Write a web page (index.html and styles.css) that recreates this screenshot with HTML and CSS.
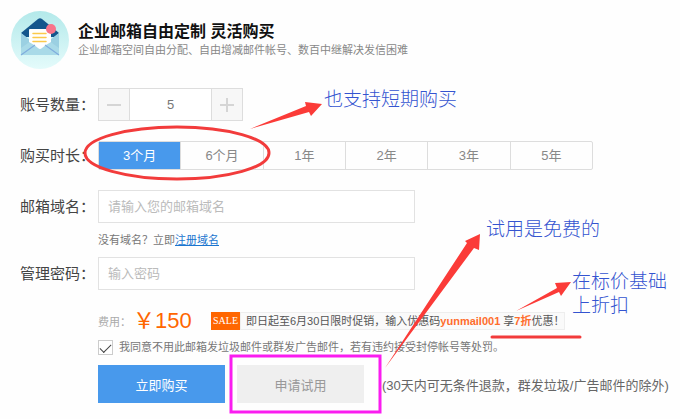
FILE: index.html
```html
<!DOCTYPE html>
<html lang="zh-CN">

<head>
    <meta charset="UTF-8">
    <meta name="viewport" content="width=device-width, initial-scale=1.0">
    <link rel="stylesheet" href="styles.css">
    <title>企业邮箱购买</title>
</head>

<body>

    <header class="page-header">
        <svg class="logo" viewBox="0 0 58 58" aria-hidden="true">
            <defs>
                <linearGradient id="logoBg" x1="0" y1="0" x2="0" y2="1">
                    <stop offset="0" stop-color="#b3e9ea" />
                    <stop offset="1" stop-color="#e4fbfb" />
                </linearGradient>
            </defs>
            <circle cx="29" cy="29" r="29" fill="url(#logoBg)" />
            <path d="M10 22 L27 8 Q29 6.500 31 8 L48 22 V26 H10 Z" fill="#14568c" />
            <path d="M10 22 L29 37 L48 22 V44 H10 Z" fill="#a9dae8" />
            <path d="M10 22 L20 30 L10 37 Z M48 22 L38 30 L48 37 Z" fill="#9bd0e2" />
            <path d="M18 19 Q18 18 19 18 H39 Q40 18 40 19 V31 Q36 33 31 37 Q29 39 27 37 Q22 33 18 31 Z" fill="#fff" />
            <path d="M10 44 L24 34 M48 44 L34 34" stroke="#80addd" stroke-width="1.200" fill="none" />
            <path d="M22 22.500 H35 M22 26.500 H35 M22 30.500 H35" stroke="#fbca4b" stroke-width="1.500" stroke-linecap="round" />
            <circle cx="40" cy="18" r="5" fill="#f9748a" />
        </svg>
        <div>
            <h1>企业邮箱自由定制 灵活购买</h1>
            <p>企业邮箱空间自由分配、自由增减邮件帐号、数百中继解决发信困难</p>
        </div>
    </header>

    <form class="buy-form">
        <div class="row">
            <label class="row-label" for="count">账号数量：</label>
            <div class="stepper">
                <button type="button" aria-label="减少"><svg viewBox="0 0 14 14"><path d="M0 7 H14" /></svg></button>
                <input type="text" id="count" value="5">
                <button type="button" aria-label="增加"><svg viewBox="0 0 14 14"><path d="M0 7 H14 M7 0 V14" /></svg></button>
            </div>
        </div>

        <div class="row" role="radiogroup" aria-labelledby="periodLabel">
            <span class="row-label" id="periodLabel">购买时长：</span>
            <div class="periods">
                <label><input type="radio" name="period" checked><span>3个月</span></label>
                <label><input type="radio" name="period"><span>6个月</span></label>
                <label><input type="radio" name="period"><span>1年</span></label>
                <label><input type="radio" name="period"><span>2年</span></label>
                <label><input type="radio" name="period"><span>3年</span></label>
                <label><input type="radio" name="period"><span>5年</span></label>
            </div>
        </div>

        <div class="row">
            <label class="row-label" for="domain">邮箱域名：</label>
            <input class="text-input" type="text" id="domain" placeholder="请输入您的邮箱域名">
        </div>
        <p class="hint">没有域名？立即<a href="#">注册域名</a></p>

        <div class="row">
            <label class="row-label" for="password">管理密码：</label>
            <input class="text-input" type="password" id="password" placeholder="输入密码">
        </div>

        <div class="price-row">
            <span class="price-label">费用：</span>
            <span class="price">￥150</span>
            <span class="sale">SALE</span>
            <p class="promo">即日起至6月30日限时促销，输入优惠码<b>yunmail001</b> 享<b>7折</b>优惠！</p>
        </div>

        <label class="agree"><input type="checkbox" checked>我同意不用此邮箱发垃圾邮件或群发广告邮件，若有违约接受封停帐号等处罚。</label>

        <div class="actions">
            <button type="button" class="buy">立即购买</button>
            <button type="button" class="trial">申请试用</button>
            <span class="refund">(30天内可无条件退款，群发垃圾/广告邮件的除外)</span>
        </div>
    </form>

    <!-- callouts drawn over the form -->
    <svg class="marks" viewBox="0 0 680 419" aria-hidden="true">
        <ellipse cx="177" cy="153" rx="92" ry="26" />
        <path d="M250 129 L306 106 L305 102 L322 104 L311 116 L309 112 Z" />
        <path d="M385 368 L467 243 L465 241 L480 234 L479 250 L474 248 Z" />
        <path d="M516 311 L557 288 L555 283 L571 282 L561 296 L559 292 Z" />
        <line x1="492" y1="337" x2="580" y2="337" />
        <rect x="231" y="356" width="149" height="56" />
    </svg>
    <p class="note note-period">也支持短期购买</p>
    <p class="note note-trial">试用是免费的</p>
    <p class="note note-discount">在标价基础<br>上折扣</p>

</body>

</html>
```

FILE: styles.css
```css
* {
    box-sizing: border-box;
}

body {
    position: relative;
    margin: 0;
    background-color: #fefefe;
    color: #444;
    font-family: "Liberation Sans", "Noto Sans CJK SC", sans-serif;
    font-size: 13px;
}

h1,
p {
    margin: 0;
}

button,
input {
    margin: 0;
    padding: 0;
    border: 0;
    font: inherit;
}

button {
    cursor: pointer;
}

.page-header {
    display: flex;
    align-items: center;
    gap: 9px;
    padding: 11px 11px 0;
}

.logo {
    width: 58px;
    height: 58px;
}

.page-header h1 {
    color: #111;
    font-size: 16px;
    line-height: 20px;
}

.page-header p {
    color: #888;
    font-size: 11px;
    line-height: 16px;
}

.buy-form {
    padding: 19px 12px 16px 98px;
}

.row {
    display: flex;
    align-items: center;
    margin-left: -78px;
    margin-bottom: 20px;
}

.row-label {
    flex: none;
    width: 78px;
    font-size: 15px;
    line-height: 20px;
    white-space: nowrap;
}

.stepper {
    display: flex;
    height: 33px;
    border: 1px solid #ddd;
}

.stepper button {
    width: 30px;
    background-color: #f7f7f7;
}

.stepper svg {
    display: block;
    width: 14px;
    margin: 0 auto;
    stroke: #d5d5d5;
    stroke-width: 2;
}

.stepper input {
    width: 83px;
    border: solid #ddd;
    border-width: 0 1px;
    background-color: #fff;
    color: #777;
    text-align: center;
}

.periods {
    display: flex;
    flex: 1;
    max-width: 495px;
    height: 29px;
    border: 1px solid #ddd;
    border-radius: 2px;
}

.periods label {
    flex: 1;
    border-left: 1px solid #ddd;
    color: #888;
    line-height: 27px;
    text-align: center;
    cursor: pointer;
}

.periods label:first-child {
    border-left: 0;
}

.periods input {
    position: absolute;
    opacity: 0;
}

.periods span {
    display: block;
}

.periods input:checked + span {
    background-color: #4899ec;
    color: #fff;
}

.text-input {
    flex: 1;
    max-width: 317px;
    height: 33px;
    padding: 0 9px;
    border: 1px solid #e2e2e2;
    background-color: #fff;
}

.text-input::placeholder {
    color: #bbb;
}

.hint {
    margin: -12px 0 8px;
    color: #777;
    font-size: 11px;
    line-height: 18px;
}

.hint a {
    color: #1a75cf;
}

.price-row {
    display: flex;
    align-items: center;
    height: 24px;
    margin-top: -1px;
    font-size: 11px;
    white-space: nowrap;
}

.price-label {
    width: 35px;
    color: #aaa;
}

.price {
    width: 78px;
    color: #f60;
    font-size: 22px;
    line-height: 24px;
}

.sale {
    width: 29px;
    background-color: #f60;
    color: #fff;
    font-family: "Liberation Serif", serif;
    font-size: 10px;
    line-height: 18px;
    text-align: center;
}

.promo {
    padding: 0 0 0 5px;
    border: 1px solid #eee;
    background-color: #fafafa;
    color: #555;
    line-height: 16px;
}

.promo b {
    color: #ff6d2c;
}

.agree {
    display: flex;
    align-items: center;
    gap: 6px;
    margin-top: 6px;
    color: #777;
    font-size: 11px;
    line-height: 16px;
}

.agree input {
    appearance: none;
    width: 15px;
    height: 15px;
    border: 1px solid #ccc;
    background-color: #fff;
}

.agree input:checked::before {
    content: "";
    display: block;
    width: 10px;
    height: 5px;
    margin: 3px auto 0;
    border: solid #444;
    border-width: 0 0 1px 1px;
    transform: rotate(-45deg);
}

.actions {
    display: flex;
    align-items: center;
    gap: 12px;
    margin-top: 10px;
}

.actions button {
    flex: none;
    width: 127px;
    height: 38px;
}

.buy {
    background-color: #4899ec;
    color: #fff;
}

.trial {
    background-color: #efefef;
    color: #999;
}

.refund {
    margin-left: 6px;
    color: #666;
    white-space: nowrap;
}

.marks {
    position: absolute;
    top: 0;
    left: 0;
    width: 680px;
    height: 419px;
    pointer-events: none;
}

.marks path {
    fill: #fb3b38;
}

.marks ellipse,
.marks line {
    fill: none;
    stroke: #f23b3b;
    stroke-width: 3;
    stroke-linecap: round;
}

.marks rect {
    fill: none;
    stroke: #fa1cf0;
    stroke-width: 3;
}

.note {
    position: absolute;
    color: #3454d0;
    font-size: 19px;
    font-weight: 300;
    line-height: 24px;
    white-space: nowrap;
}

.note-period {
    top: 88px;
    left: 324px;
}

.note-trial {
    top: 218px;
    left: 486px;
}

.note-discount {
    top: 270px;
    left: 572px;
}
```
